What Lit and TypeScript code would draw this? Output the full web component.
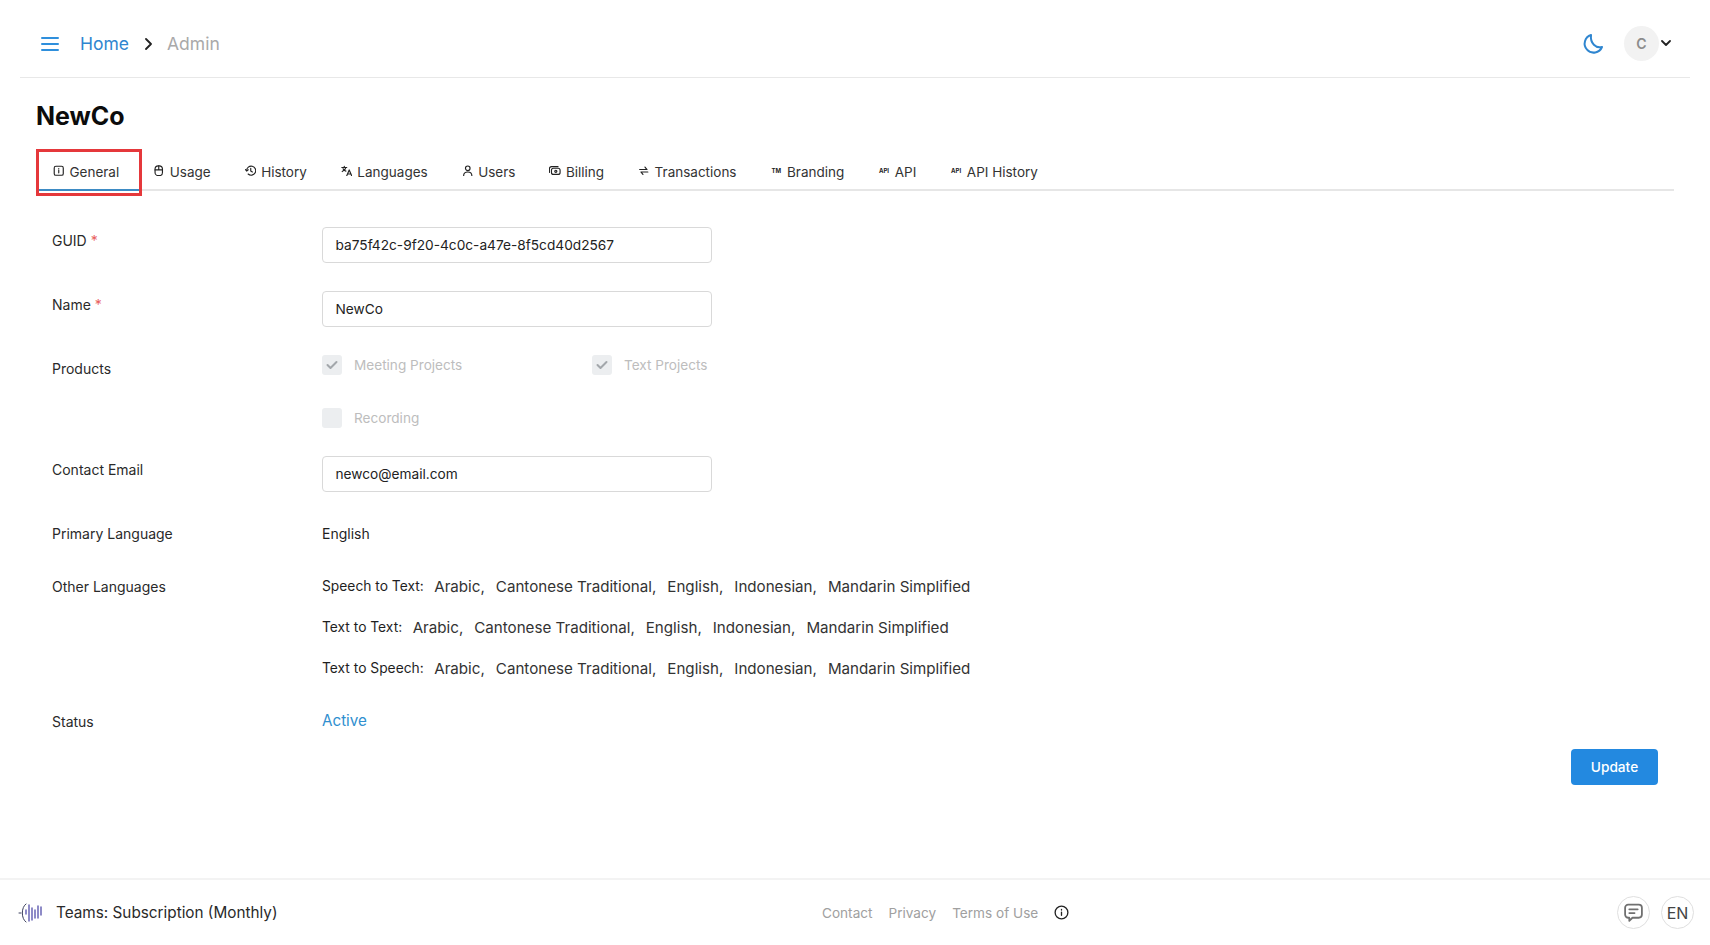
import { LitElement, html, css, svg } from "lit";
import { customElement } from "lit/decorators.js";

const langs = ["Arabic", "Cantonese Traditional", "English", "Indonesian", "Mandarin Simplified"];

const tabIcons: Record<string, unknown> = {
  general: svg`<rect x="2.5" y="2.5" width="11" height="11" rx="2"/><path d="M8 7.500v3M8 5.200v.6"/>`,
  usage: svg`<rect x="3.500" y="2" width="9" height="12" rx="4"/><path d="M3.500 7h9M8 2v5"/>`,
  history: svg`<path d="M3 8a5.500 5.500 0 1 1 1.800 4"/><path d="M1.500 6.500 3 8.200l2-1.400M8 5v3.200l2 1.300"/>`,
  languages: svg`<path d="M2 4h6M5 2.500V4M7 4c-.5 2.500-2 4-4.500 5M3.500 5.500c.6 1.300 1.800 2.500 3.500 3M8 14l3-7 3 7M9 12h4"/>`,
  users: svg`<circle cx="8" cy="5" r="2.800"/><path d="M3 14c0-3 2-4.500 5-4.500s5 1.500 5 4.500"/>`,
  billing: svg`<rect x="4" y="5" width="10.500" height="7.500" rx="2.500"/><path d="M12 3H4a2.500 2.500 0 0 0-2.500 2.500V10"/><circle cx="9.300" cy="8.700" r="1.300"/>`,
  transactions: svg`<path d="M3 6.500h9L9.500 3.500M13 9.500H4.500L7 12.500"/>`,
};

const tabs = [
  { key: "general", label: "General" },
  { key: "usage", label: "Usage" },
  { key: "history", label: "History" },
  { key: "languages", label: "Languages" },
  { key: "users", label: "Users" },
  { key: "billing", label: "Billing" },
  { key: "transactions", label: "Transactions" },
  { key: "tm", label: "Branding", mark: "TM" },
  { key: "api", label: "API", mark: "API" },
  { key: "apih", label: "API History", mark: "API" },
];

@customElement("app-root")
export class AppRoot extends LitElement {
  static styles = css`
    :host {
      display: flex;
      flex-direction: column;
      height: 945px;
      overflow: hidden;
      background: #fff;
      color: #1f1f1f;
      font-family: Inter, "Noto Sans", sans-serif;
      font-size: 14px;
    }
    .header {
      flex: none;
      height: 78px;
      margin: 0 20px;
      padding: 10px 19px 0 21px;
      border-bottom: 1px solid #e8e8e8;
      display: flex;
      align-items: center;
      box-sizing: border-box;
    }
    .burger { width: 18px; height: 14px; color: #2f8fdc; margin-right: 21px; }
    .crumb { font-size: 17.500px; }
    .home { color: #2f86d0; }
    .admin { color: #a9a9a9; }
    .chev { width: 10px; height: 12px; margin: 0 14px 0 14px; color: #222; }
    .spacer { flex: 1; }
    .moon { width: 22px; height: 22px; color: #2f86d0; margin-right: 20px; }
    .avatar {
      width: 35px; height: 35px; border-radius: 50%;
      background: #f2f2f2; color: #8c8c8c;
      display: flex; align-items: center; justify-content: center;
      font-size: 14px; font-weight: 600;
    }
    .caret { width: 10px; height: 7px; margin-left: 2px; color: #222; }
    .main { flex: 1; padding: 0 36px; display: flex; flex-direction: column; min-height: 0; }
    h1 { margin: 23px 0 0; font-size: 25px; line-height: 30px; font-weight: 700; color: #0c0c0c; }
    .tabs {
      margin-top: 18px;
      height: 42px;
      border-bottom: 2px solid #e6e6e6;
      display: flex;
      box-sizing: border-box;
    }
    .tab {
      position: relative;
      display: flex;
      align-items: center;
      gap: 5px;
      height: 42px;
      padding: 3px 17px 0;
      font-size: 13.500px;
      color: #333;
      box-sizing: border-box;
    }
    .tab.first::before {
      content: "";
      position: absolute;
      left: 0; top: 0;
      width: 106px; height: 47px;
      box-sizing: border-box;
      border: 3px solid #e5383b;
    }
    .tab.first::after {
      content: "";
      position: absolute;
      left: 3px; bottom: 0;
      width: 100px; height: 2px;
      background: #3d8bc4;
    }
    .tab svg { width: 11.500px; height: 11.500px; color: #222; flex: none; margin-top: -2px; }
    .mark { font-size: 6px; font-weight: 700; line-height: 11px; color: #222; width: 11.500px; text-align: center; margin-top: -2px; }
    .form {
      margin-top: 36px;
      padding-left: 16px;
      display: grid;
      grid-template-columns: 270px 1fr;
      row-gap: 28px;
      font-size: 14px;
    }
    .label { color: #2a2a2a; padding-top: 3.500px; line-height: 20px; }
    .req { color: #e8605e; margin-left: 0; }
    .input {
      width: 390px; height: 36px;
      border: 1px solid #d9d9d9;
      border-radius: 4px;
      padding: 0 12.500px;
      display: flex; align-items: center;
      box-sizing: border-box;
      color: #222;
      font-size: 13.700px;
    }
    .checks {
      display: grid;
      grid-template-columns: 270px 1fr;
      row-gap: 33px;
      color: #bdbdbd;
      font-size: 13.600px;
    }
    .check { display: flex; align-items: center; gap: 12px; height: 20px; }
    .box {
      width: 20px; height: 20px; border-radius: 3px;
      background: #eceef0; color: #a3a7ab;
      display: flex; align-items: center; justify-content: center;
    }
    .box svg { width: 12px; height: 10px; }
    .value { line-height: 20px; padding-top: 3.500px; }
    .primary { margin-bottom: 1.500px; }
    .lang-list { padding-top: 3px; margin-bottom: 2px; }
    .lang-row { display: flex; align-items: center; height: 20px; margin-bottom: 21px; }
    .lang-row:last-child { margin-bottom: 0; }
    .lang-title { margin-right: 10.500px; font-size: 13.800px; }
    .lang { font-size: 15.150px; margin-right: 11px; color: #333; }
    .active { color: #2f8fcf; font-size: 15.200px; line-height: 20px; padding-top: 3px; }
    .actions { display: flex; justify-content: flex-end; padding-right: 16px; margin-top: 17px; }
    .update {
      width: 87px; height: 36px;
      border-radius: 4px;
      background: #2389e0;
      color: #fff;
      display: flex; align-items: center; justify-content: center;
      font-weight: 500; font-size: 13.700px;
    }
    .footer {
      flex: none;
      height: 65px;
      border-top: 2px solid #f3f3f3;
      padding: 0 16px 0 18px;
      display: grid;
      grid-template-columns: 804px auto 1fr;
      align-items: center;
    }
    .plan { display: flex; align-items: center; gap: 13px; font-size: 15.300px; color: #2a2a2a; }
    .logo { width: 25px; height: 24px; flex: none; }
    .links { display: flex; align-items: center; gap: 16px; color: #a0a0a0; font-size: 13.600px; }
    .info { width: 15px; height: 15px; color: #222; }
    .right { display: flex; justify-content: flex-end; gap: 11px; }
    .round {
      width: 33px; height: 33px; border-radius: 50%;
      border: 1px solid #dfdfdf;
      box-sizing: border-box;
      display: flex; align-items: center; justify-content: center;
      color: #444; font-size: 16px;
    }
    .round svg { width: 21px; height: 21px; color: #707070; }
  `;

  private tabIcon(t: { key: string; mark?: string }) {
    if (t.mark) return html`<span class="mark">${t.mark}</span>`;
    return html`<svg viewBox="1 1 14 14" fill="none" stroke="currentColor" stroke-width="1.400" stroke-linecap="round" stroke-linejoin="round">${tabIcons[t.key]}</svg>`;
  }

  private langRow(title: string) {
    return html`<div class="lang-row">
      <span class="lang-title">${title}:</span>
      ${langs.map((l, i) => html`<span class="lang">${l}${i < langs.length - 1 ? "," : ""}</span>`)}
    </div>`;
  }

  private check(label: string, on: boolean) {
    return html`<div class="check">
      <span class="box">${on
        ? html`<svg viewBox="0 0 12 10" fill="none" stroke="currentColor" stroke-width="2" stroke-linecap="round" stroke-linejoin="round"><path d="M1.500 5l3 3 6-6"/></svg>`
        : ""}</span>
      <span>${label}</span>
    </div>`;
  }

  render() {
    return html`
      <div class="header">
        <svg class="burger" viewBox="0 0 18 14" fill="none" stroke="currentColor" stroke-width="2" stroke-linecap="round"><path d="M1 1h16M1 7h16M1 13h16"/></svg>
        <span class="crumb home">Home</span>
        <svg class="chev" viewBox="0 0 10 12" fill="none" stroke="currentColor" stroke-width="1.800" stroke-linecap="round" stroke-linejoin="round"><path d="M3 1l5 5-5 5"/></svg>
        <span class="crumb admin">Admin</span>
        <span class="spacer"></span>
        <svg class="moon" viewBox="0 0 22 22" fill="none" stroke="currentColor" stroke-width="2" stroke-linecap="round" stroke-linejoin="round"><path d="M9 2a9 9 0 1 0 11 12c-6 1.500-12-3.500-11-12z"/></svg>
        <span class="avatar">C</span>
        <svg class="caret" viewBox="0 0 10 7" fill="none" stroke="currentColor" stroke-width="1.800" stroke-linecap="round" stroke-linejoin="round"><path d="M1 1l4 4 4-4"/></svg>
      </div>
      <div class="main">
        <h1>NewCo</h1>
        <div class="tabs">
          ${tabs.map((t, i) => html`<div class="tab ${i === 0 ? "first" : ""}">${this.tabIcon(t)}<span>${t.label}</span></div>`)}
        </div>
        <div class="form">
          <div class="label">GUID <span class="req">*</span></div>
          <div class="input">ba75f42c-9f20-4c0c-a47e-8f5cd40d2567</div>
          <div class="label">Name <span class="req">*</span></div>
          <div class="input">NewCo</div>
          <div class="label">Products</div>
          <div class="checks">
            ${this.check("Meeting Projects", true)}
            ${this.check("Text Projects", true)}
            ${this.check("Recording", false)}
          </div>
          <div class="label">Contact Email</div>
          <div class="input">newco@email.com</div>
          <div class="label primary">Primary Language</div>
          <div class="value">English</div>
          <div class="label">Other Languages</div>
          <div class="lang-list">
            ${this.langRow("Speech to Text")}
            ${this.langRow("Text to Text")}
            ${this.langRow("Text to Speech")}
          </div>
          <div class="label">Status</div>
          <div class="active">Active</div>
        </div>
        <div class="actions"><div class="update">Update</div></div>
      </div>
      <div class="footer">
        <div class="plan">
          <svg class="logo" viewBox="0 0 25 24" fill="none" stroke-linecap="round">
            <path d="M8 3C3 6 3 18 8 21" stroke="#3b3f5c" stroke-width="1"/>
            <path d="M1 12h2" stroke="#3b3f5c" stroke-width="1"/>
            <path d="M8 9v4M11 4v16M14 7v12M17 9v8M20 5v12M23 6v8" stroke="#6a66b5" stroke-width="1.500"/>
          </svg>
          <span>Teams: Subscription (Monthly)</span>
        </div>
        <div class="links">
          <span>Contact</span><span>Privacy</span><span>Terms of Use</span>
          <svg class="info" viewBox="0 0 16 16" fill="none" stroke="currentColor" stroke-width="1.400" stroke-linecap="round"><circle cx="8" cy="8" r="6.800"/><path d="M8 7.500v3.500M8 4.800v.5"/></svg>
        </div>
        <div class="right">
          <span class="round"><svg viewBox="0 0 20 20" fill="none" stroke="currentColor" stroke-width="1.700" stroke-linecap="round" stroke-linejoin="round"><path d="M5 2.500h10a3 3 0 0 1 3 3v6.500a3 3 0 0 1-3 3H9l-3 3v-3H5a3 3 0 0 1-3-3V5.500a3 3 0 0 1 3-3z"/><path d="M6 7h8M6 10.500h5"/></svg></span>
          <span class="round">EN</span>
        </div>
      </div>
    `;
  }
}
